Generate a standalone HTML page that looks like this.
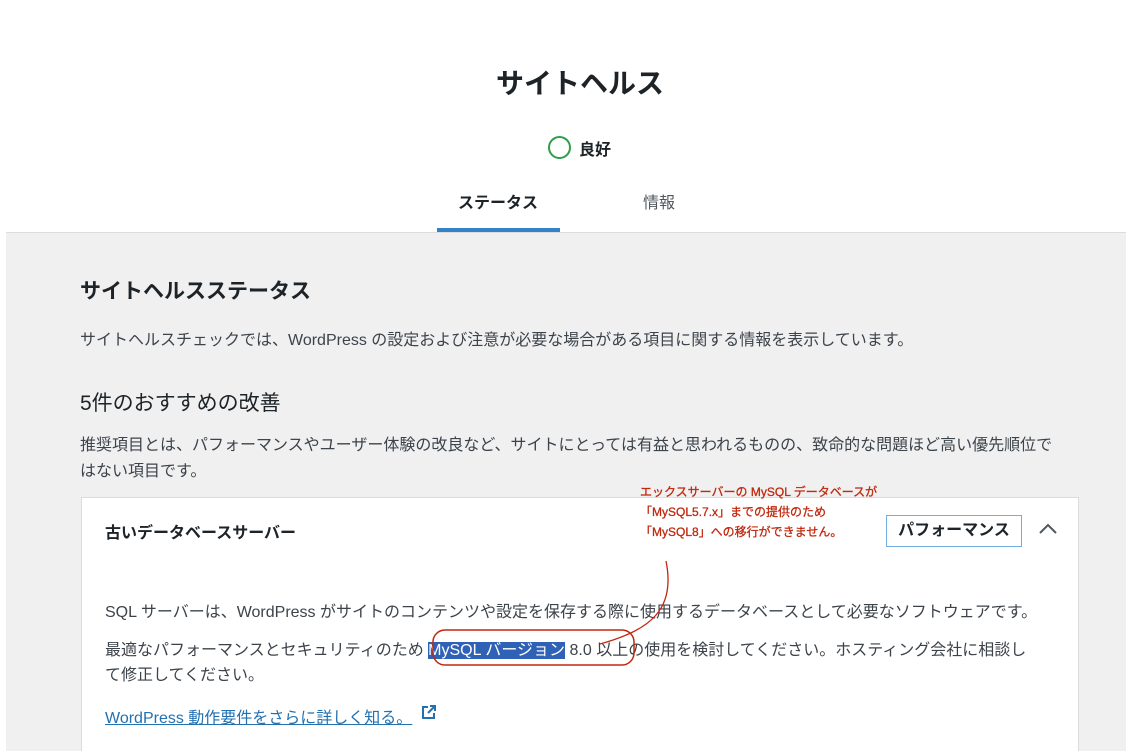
<!DOCTYPE html>
<html><head><meta charset="utf-8">
<style>
*{margin:0;padding:0;box-sizing:border-box}
html,body{width:1126px;height:751px;overflow:hidden}
body{background:#fff;font-family:"Liberation Sans","Noto Sans CJK JP",sans-serif;color:#1d2327;position:relative}
.abs{position:absolute;white-space:nowrap}
.gray{position:absolute;left:6px;top:232px;width:1120px;height:519px;background:#f0f0f1;border-top:1px solid #dcdcde}
.card{position:absolute;left:81px;top:497px;width:998px;height:260px;background:#fff;border:1px solid #dcdcde;border-bottom:none}
p{font-size:16px;color:#3c434a}
.red{color:#c0280e;font-size:12px;font-weight:bold}
</style></head><body>
<div class="abs" style="left:0;width:1160px;text-align:center;top:62px;font-size:28px;font-weight:bold">サイトヘルス</div>
<div class="abs" style="left:548px;top:136px;width:23px;height:23px;border:2px solid #2d9e4d;border-radius:50%"></div>
<div class="abs" style="left:579px;top:136px;font-size:16px;font-weight:bold">良好</div>
<div class="abs" style="left:458px;top:189px;font-size:16px;font-weight:bold">ステータス</div>
<div class="abs" style="left:643px;top:189px;font-size:16px;color:#50575e">情報</div>
<div class="gray"></div>
<div class="abs" style="left:437px;top:228px;width:123px;height:4px;background:#3582c4"></div>
<div class="abs" style="left:80px;top:275px;font-size:21px;font-weight:bold">サイトヘルスステータス</div>
<p class="abs" style="left:80px;top:326px">サイトヘルスチェックでは、WordPress の設定および注意が必要な場合がある項目に関する情報を表示しています。</p>
<div class="abs" style="left:80px;top:387px;font-size:21px;color:#1d2327">5件のおすすめの改善</div>
<p class="abs" style="left:80px;top:433px;line-height:26px">推奨項目とは、パフォーマンスやユーザー体験の改良など、サイトにとっては有益と思われるものの、致命的な問題ほど高い優先順位で<br>はない項目です。</p>
<div class="card"></div>
<div class="abs" style="left:105px;top:519px;font-size:16px;font-weight:bold">古いデータベースサーバー</div>
<div class="abs" style="left:886px;top:515px;width:136px;height:32px;border:1px solid #72aee6;font-size:16px;font-weight:bold;text-align:center;line-height:30px">パフォーマンス</div>
<svg class="abs" style="left:1038px;top:521px" width="20" height="16"><path d="M2 12 L10 4 L18 12" fill="none" stroke="#50575e" stroke-width="2"/></svg>
<div class="abs red" style="left:640px;top:482px;line-height:20px;font-weight:normal;-webkit-text-stroke:0.3px #c0280e">エックスサーバーの MySQL データベースが<br>「MySQL5.7.x」までの提供のため<br>「MySQL8」への移行ができません。</div>
<p class="abs" style="left:105px;top:598px">SQL サーバーは、WordPress がサイトのコンテンツや設定を保存する際に使用するデータベースとして必要なソフトウェアです。</p>
<p class="abs" style="left:105px;top:638px;line-height:25px">最適なパフォーマンスとセキュリティのため <span style="background:#2f62b6;color:#fff">MySQL バージョン</span> 8.0 以上の使用を検討してください。ホスティング会社に相談し<br>て修正してください。</p>
<svg class="abs" style="left:430px;top:560px" width="240" height="110"><path d="M236 1 C246 50 220 70 170 84" fill="none" stroke="#c0280e" stroke-width="1.3"/><rect x="3" y="70" width="201" height="35" rx="12" fill="none" stroke="#c0280e" stroke-width="1.5"/></svg>
<p class="abs" style="left:105px;top:704px;color:#2271b1;text-decoration:underline">WordPress 動作要件をさらに詳しく知る。 </p>
<svg class="abs" style="left:421px;top:704px" width="16" height="16"><path d="M7 3H2V14H13V9M9 2H14V7M14 2L7 9" fill="none" stroke="#2271b1" stroke-width="2"/></svg>
</body></html>
